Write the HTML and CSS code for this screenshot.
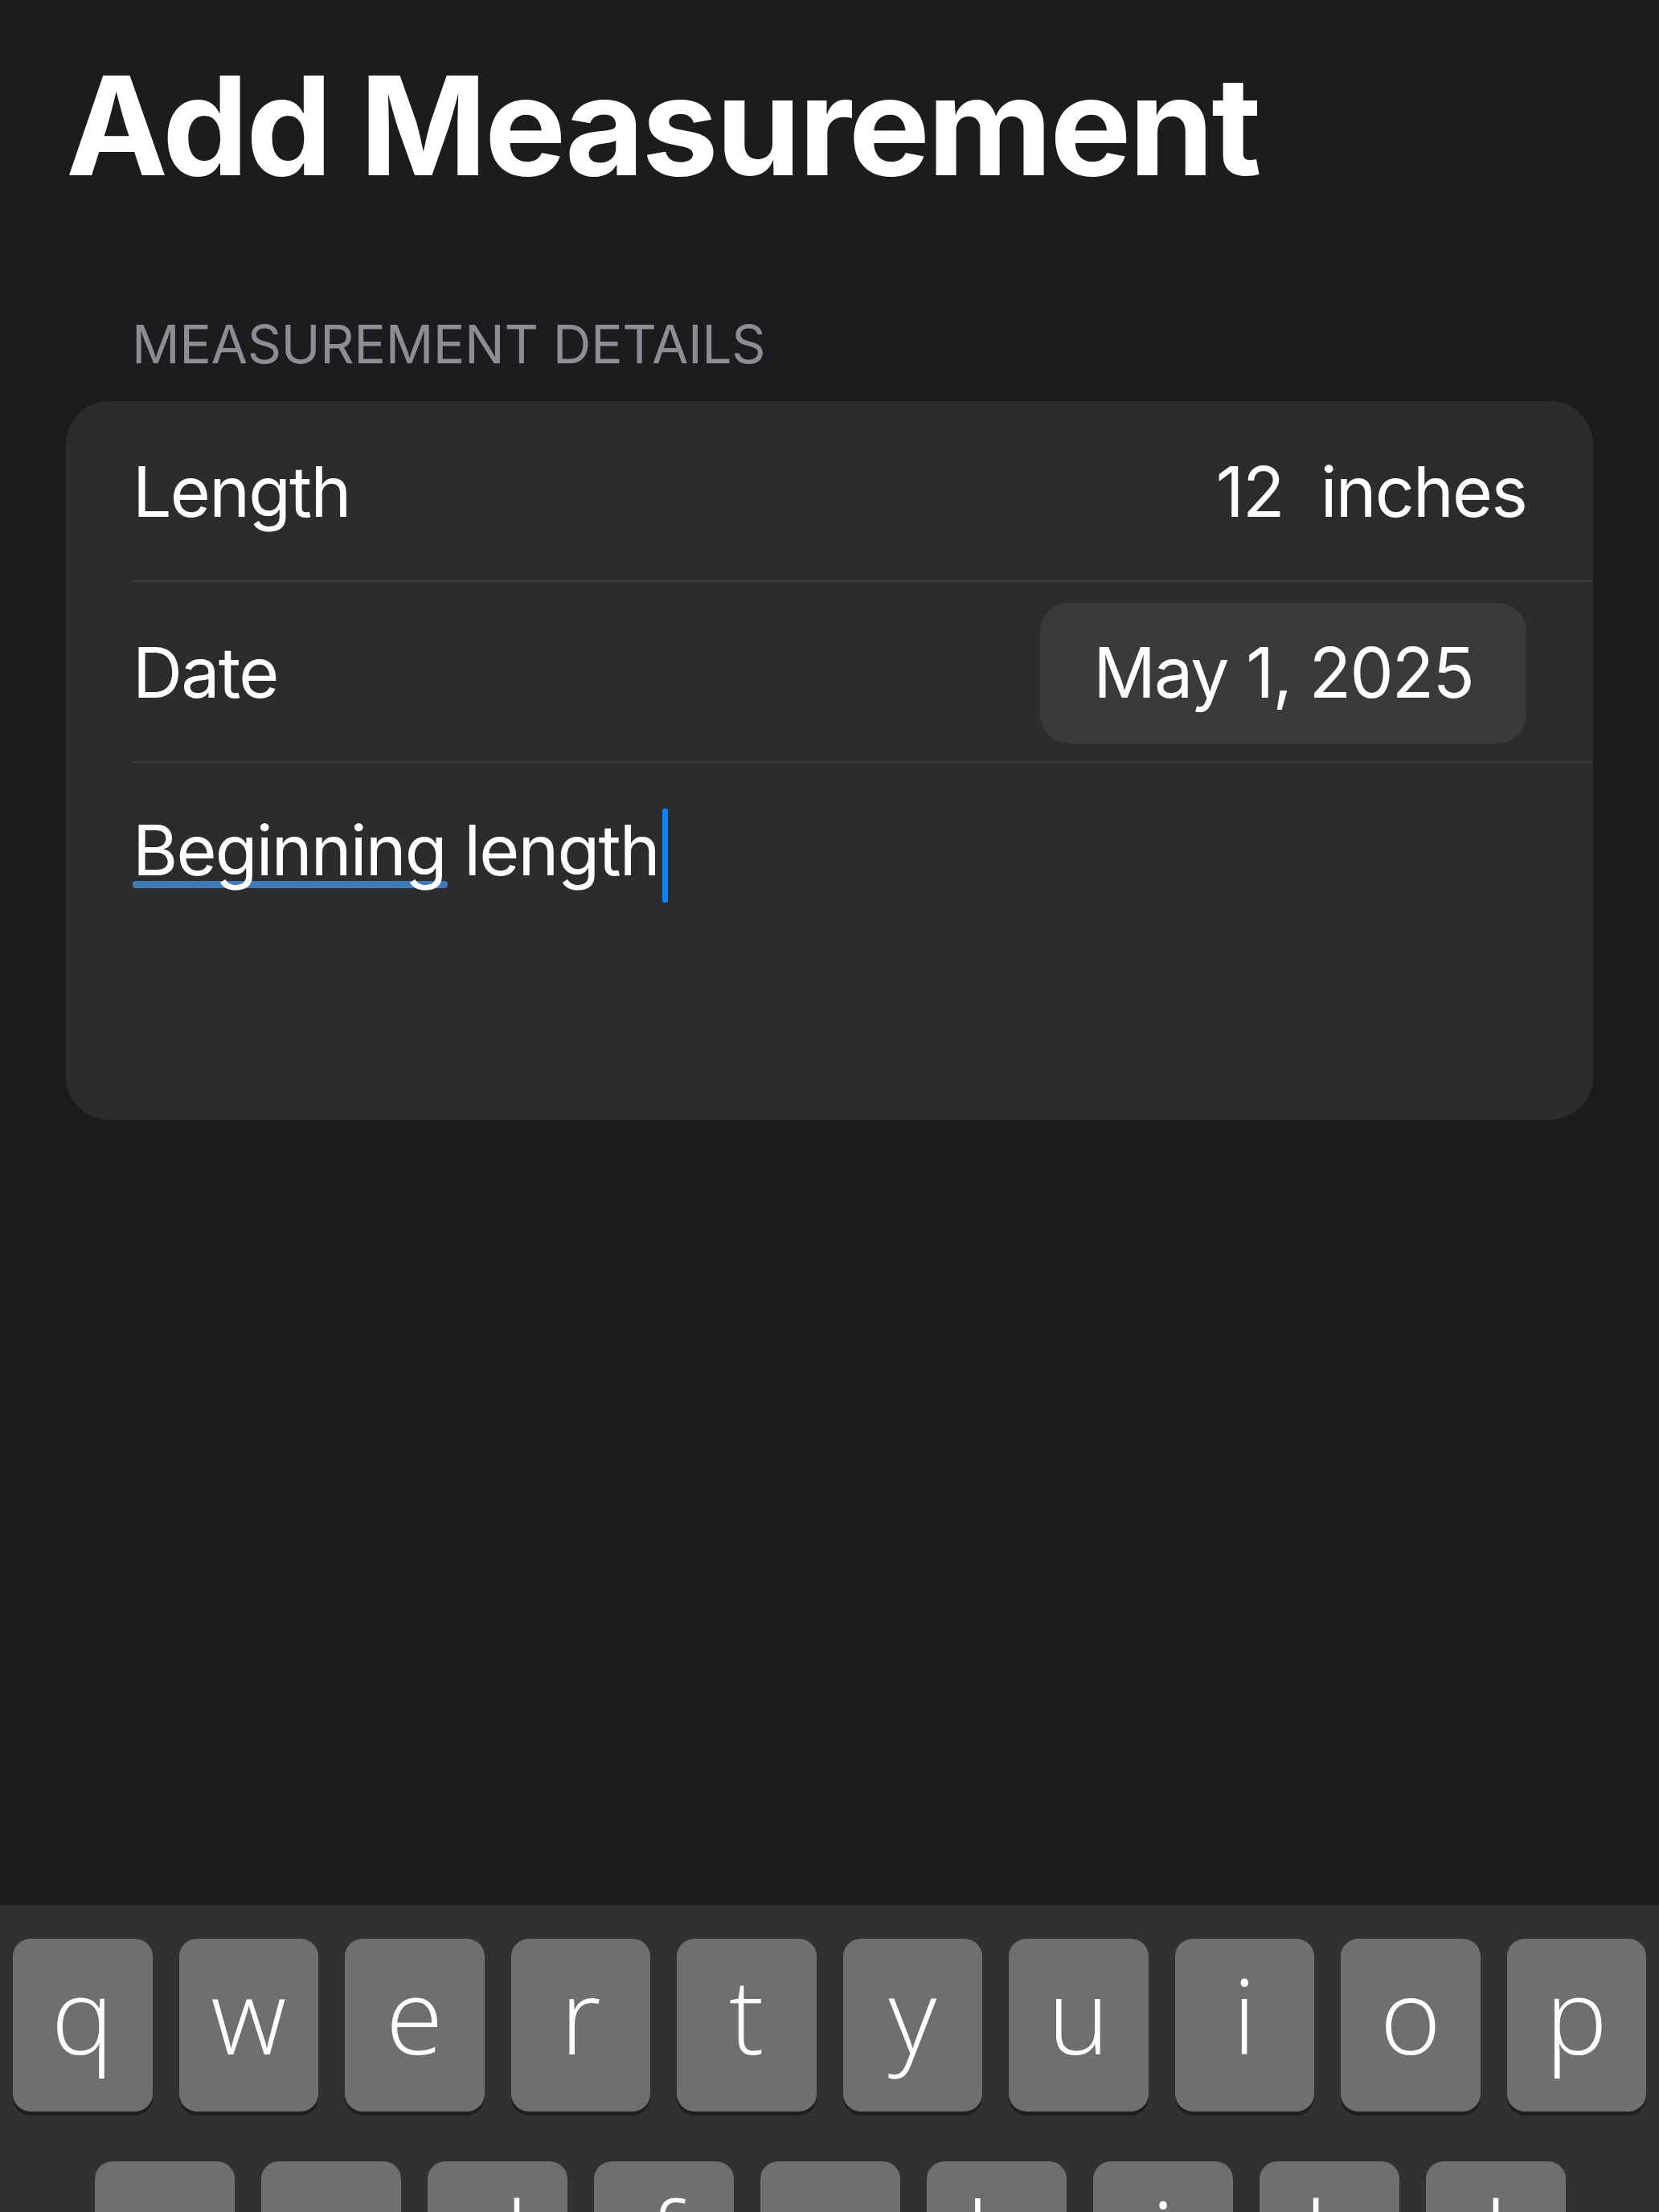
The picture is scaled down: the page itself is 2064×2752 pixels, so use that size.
FILE: index.html
```html
<!DOCTYPE html>
<html lang="en">
<head>
    <meta charset="UTF-8">
    <meta name="viewport" content="width=device-width, initial-scale=1.0">
    <title>Add Measurement</title>
    <link rel="stylesheet" href="styles.css">
</head>
<body>
    <div class="screen">
        <main class="content">
            <h1 class="title">Add Measurement</h1>

            <section class="form-section">
                <h2 class="section-header">MEASUREMENT DETAILS</h2>
                <div class="card">
                    <div class="row">
                        <span class="label">Length</span>
                        <span class="value">
                            <span>12</span>
                            <span>inches</span>
                        </span>
                    </div>
                    <div class="row">
                        <span class="label">Date</span>
                        <span class="date-pill">May 1, 2025</span>
                    </div>
                    <div class="notes">
                        <span class="suggested">Beginning</span> length<span class="cursor"></span>
                    </div>
                </div>
            </section>
        </main>

        <div class="keyboard">
            <div class="key-row">
                <span class="key">q</span>
                <span class="key">w</span>
                <span class="key">e</span>
                <span class="key">r</span>
                <span class="key">t</span>
                <span class="key">y</span>
                <span class="key">u</span>
                <span class="key">i</span>
                <span class="key">o</span>
                <span class="key">p</span>
            </div>
            <div class="key-row second">
                <span class="key">a</span>
                <span class="key">s</span>
                <span class="key">d</span>
                <span class="key">f</span>
                <span class="key">g</span>
                <span class="key">h</span>
                <span class="key">j</span>
                <span class="key">k</span>
                <span class="key">l</span>
            </div>
        </div>
    </div>
</body>
</html>
```

FILE: styles.css
```css
body {
    margin: 0;
    font-family: Inter, "Liberation Sans", sans-serif;
    background-color: #1c1c1e;
    color: #ffffff;
}

.screen {
    height: 2752px;
    display: flex;
    flex-direction: column;
    overflow: hidden;
}

.content {
    padding: 0 82px;
}

.title {
    margin: 56px 0 0;
    font-size: 170px;
    line-height: 200px;
    font-weight: 700;
    letter-spacing: -3px;
}

.section-header {
    margin: 132px 0 31px;
    padding-left: 82px;
    font-size: 66px;
    line-height: 80px;
    font-weight: 400;
    letter-spacing: -0.4px;
    color: #8d8d93;
}

.card {
    background-color: #2c2c2e;
    border-radius: 54px;
    overflow: hidden;
}

.row {
    display: flex;
    justify-content: space-between;
    align-items: center;
    height: 223px;
    margin-left: 83px;
    padding-right: 83px;
    border-bottom: 2px solid #3d3d40;
    font-size: 86px;
    line-height: 1.2;
    letter-spacing: -1.8px;
}

.label {
    padding-top: 5px;
}

.value {
    display: flex;
    gap: 46px;
    padding-top: 5px;
}

.date-pill {
    padding: 0 66px;
    height: 175px;
    margin-top: 4px;
    display: flex;
    align-items: center;
    border-radius: 36px;
    background-color: #3a3a3c;
}

.notes {
    height: 387px;
    padding: 57px 83px 0;
    font-size: 86px;
    line-height: 1.2;
    letter-spacing: -1.8px;
    isolation: isolate;
}

.suggested {
    position: relative;
}

.suggested::after {
    content: "";
    position: absolute;
    left: 0;
    right: -2px;
    bottom: 5px;
    height: 9px;
    border-radius: 4px;
    background-color: #3f7ab8;
    z-index: -1;
}

.cursor {
    display: inline-block;
    width: 7px;
    height: 117px;
    margin-left: 4px;
    vertical-align: -34px;
    border-radius: 3px;
    background-color: #0a84ff;
}

.keyboard {
    margin-top: auto;
    height: 340px;
    padding-top: 42px;
    background-color: #313131;
}

.key-row {
    display: flex;
    gap: 33px;
    padding: 0 16px;
}

.key-row.second {
    margin-top: 62px;
    padding: 0 116px 0 118px;
}

.key {
    flex: 1;
    height: 187px;
    padding-bottom: 28px;
    border-radius: 22px;
    background-color: #6f6f6f;
    box-shadow: 0 5px 0 #1f1f1f;
    text-align: center;
    font-family: "Open Sans", Inter, sans-serif;
    font-size: 130px;
    line-height: 187px;
    font-weight: 300;
}
```
